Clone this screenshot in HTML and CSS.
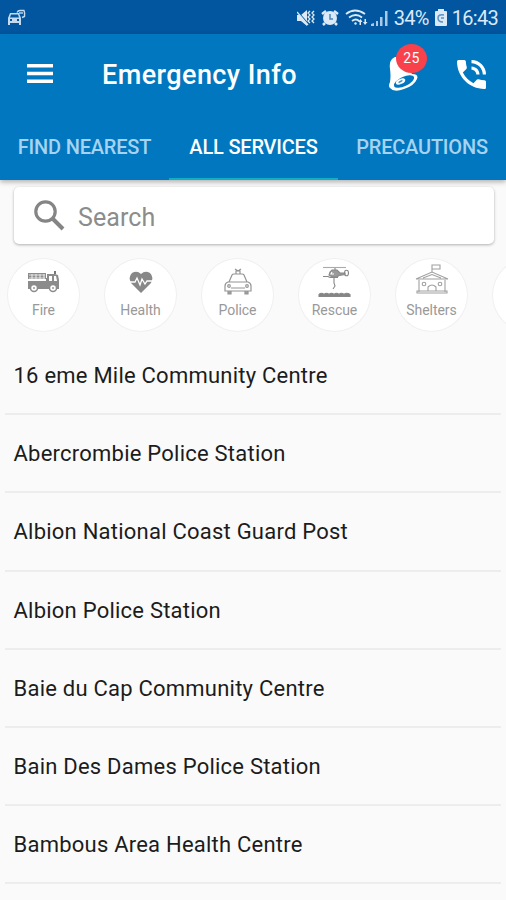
FILE: index.html
```html
<!DOCTYPE html>
<html lang="en">
<head>
<meta charset="utf-8">
<title>Emergency Info</title>
<link rel="stylesheet" href="styles.css">
</head>
<body>
<div class="app">
  <div class="status">
    <svg class="car" width="19" height="18" viewBox="0 0 19 18" fill="none" stroke="#c3daf0" stroke-width="1.4"><path d="M10 3.500q1-2 3-2h4q1 2 .5 6l-2.500 1"/><path d="M12 4h4" /><path fill="#c3daf0" stroke="none" fill-rule="evenodd" d="M3 4h9l2 5v7h-2v-2H3v2H1V9zM4 5.500L3 8.500h9l-1-3zM3 10v2h2v-2zm7 0v2h2v-2z"/></svg>
    <div class="status-right">
      <svg width="18" height="18" viewBox="0 0 18 18" fill="#dce9f6"><path d="M0 6h4l6-5v16l-6-5H0z"/><path d="M0 2l12 14" stroke="#01569f" stroke-width="1.500"/><path d="M0 3l11 13M13 2l-2 2 2 2-2 2 2 2-2 2 2 2M17 2l-2 2 2 2-2 2 2 2-2 2 2 2" fill="none" stroke="#dce9f6" stroke-width="1.300"/></svg>
      <svg class="alarm" width="18" height="18" viewBox="0 0 18 18"><circle cx="9" cy="9" r="7" fill="#dce9f6"/><path d="M1 5l4-3M17 5l-4-3M4 14l-2 2M14 14l2 2" stroke="#dce9f6" stroke-width="2.500"/><path d="M9 5v5h3" fill="none" stroke="#4a86bd" stroke-width="1.500"/></svg>
      <svg class="wifi" width="24" height="18" viewBox="0 0 24 18" fill="none" stroke="#dce9f6" stroke-width="1.800"><path d="M1 5q9-7 19 0M4 8.500q7-5 13 0M7 12q4-3 7 0"/><circle cx="10.500" cy="14.500" r="1.200" fill="#dce9f6" stroke="none"/><path fill="#dce9f6" stroke="none" d="M13 13l2.500-3 2 3h-1.500v3h-1.500v-3zM18 13h1.500v-3H21v3h1.500L20 16z"/></svg>
      <svg class="signal" width="18" height="18" viewBox="0 0 18 18"><path fill="#a9c9e7" d="M0 17v-2l3-1v3zM5 17v-5h2v5zM9 17V8h2.500v9zM14 17V2h2.500v15z"/></svg>
      <span class="percent">34%</span>
      <svg class="battery" width="12" height="18" viewBox="0 0 12 18"><path fill="#dce9f6" d="M3 0h6v2h2q1 0 1 1v13q0 1-1 1H1q-1 0-1-1V3q0-1 1-1h2z"/><path d="M9 6Q3 5 3 9t5 4M6 9h3" fill="none" stroke="#5b90c2" stroke-width="1.500"/></svg>
      <span class="clock">16:43</span>
    </div>
  </div>
  <header class="header">
    <div class="toolbar">
      <svg class="menu" width="26" height="20" viewBox="0 0 26 20" fill="#fff"><path d="M0 0h26v3.500H0zM0 7.800h26v3.500H0zM0 15.500h26V19H0z"/></svg>
      <h1 class="title">Emergency Info</h1>
      <div class="alerts">
        <svg width="32" height="36" viewBox="0 0 32 36"><path fill="#fff" d="M4 3Q8-1 14 2L24 18Q31 18 29 23Q26 30 16 33Q6 37 2 32Q0 30 2 26Q3 20 2 13Q1 6 4 3z"/><ellipse cx="16" cy="25.500" rx="11" ry="4.600" transform="rotate(-25 16 25.500)" fill="#0177bf"/><ellipse cx="12.500" cy="25.500" rx="5" ry="2.600" transform="rotate(-25 12.500 25.500)" fill="#fff"/><ellipse cx="12.500" cy="25.500" rx="2.400" ry=".9" transform="rotate(-25 12.500 25.500)" fill="#3a95cf"/></svg>
        <span class="badge">25</span>
      </div>
      <svg class="phone" width="29" height="29" viewBox="3 3 18 18" fill="#fff"><path d="M20 15.500c-1.250 0-2.450-.2-3.570-.57a1.020 1.020 0 0 0-1.020.24l-2.200 2.200a15.045 15.045 0 0 1-6.590-6.590l2.200-2.210a.96.96 0 0 0 .25-1A11.360 11.360 0 0 1 8.500 4c0-.55-.45-1-1-1H4c-.55 0-1 .45-1 1 0 9.390 7.610 17 17 17 .55 0 1-.45 1-1v-3.500c0-.55-.45-1-1-1zM19 12h2a9 9 0 0 0-9-9v2c3.870 0 7 3.130 7 7zm-4 0h2c0-2.760-2.240-5-5-5v2c1.660 0 3 1.340 3 3z"/></svg>
    </div>
    <nav class="tabs">
      <div class="tab"><span>FIND NEAREST</span></div>
      <div class="tab active"><span>ALL SERVICES</span></div>
      <div class="tab"><span>PRECAUTIONS</span></div>
    </nav>
  </header>
  <div class="search">
    <svg width="31" height="31" viewBox="0 0 31 31" fill="none" stroke="#858585"><circle cx="11.500" cy="11.500" r="9.700" stroke-width="3.200"/><path d="M18.500 18.500L29 29" stroke-width="4"/></svg>
    <span>Search</span>
  </div>
  <div class="cats">
    <div class="cat">
      <svg width="34" height="34" viewBox="0 1 34 34"><path fill="#8c8c8c" d="M1 8h18v5h1V9h8l3 1 1 5v9H1v-8h18v-2H1z"/><path d="M2 10h16M2 13h16M5 9v5M9 9v5M13 9v5M17 9v5" stroke="#e2e2e2" stroke-width="1.200"/><path d="M22 11h3v5h-3zM27 11h2l1 5h-3z" fill="#fff"/><path d="M28 6v3" stroke="#777" stroke-width="2"/><g fill="#fff" stroke="#8c8c8c" stroke-width="1.500"><circle cx="7" cy="23" r="3.500"/><circle cx="26" cy="23" r="3.500"/></g><circle cx="7" cy="23" r="1" fill="#999"/><circle cx="26" cy="23" r="1" fill="#999"/></svg>
      <span>Fire</span>
    </div>
    <div class="cat">
      <svg width="34" height="34" viewBox="0 0 34 34"><path fill="#888" d="M17 27L7 17Q4 11 8 7Q13 4 17 8Q21 4 26 7Q30 11 27 17z"/><path d="M6 16h5l2-4 3 7 2-6 3 5 2-3h5" fill="none" stroke="#fff" stroke-width="1.300"/></svg>
      <span>Health</span>
    </div>
    <div class="cat">
      <svg width="34" height="34" viewBox="0 0 34 34" fill="none" stroke="#949494" stroke-width="1.200"><path d="M8 16l3-7q.5-1 2-1h8q1.500 0 2 1l3 7M7 16h20q3 1 3 4v5H4v-5q0-3 3-4zM10 22h14M15 8V5h4v3M14 3l3 2 3-2"/><path d="M7 25v3h3v-3M24 25v3h3v-3" fill="#a0a0a0"/><circle cx="8" cy="20" r="1.300"/><circle cx="26" cy="20" r="1.300"/></svg>
      <span>Police</span>
    </div>
    <div class="cat">
      <svg width="34" height="34" viewBox="0 0 34 34" fill="none" stroke="#888" stroke-width="1.100"><path d="M5 1.500h23" stroke="#aaa"/><path fill="#999" d="M14 4h5l3 3h5v1.500l-6 1-2 1.500h-5l-3-2 1-3z"/><path d="M5 10.500h5l2 1h8M17 2v2M16 12v5l1 3-2 3"/><ellipse cx="28.500" cy="7" rx="2" ry="2.800"/><path d="M14 6l-1 2h3" stroke="#fff"/><path d="M1 28.500q2.500-2.500 5 0q2.500-2.500 5 0q2.500-2.500 5 0q2.500-2.500 5 0q2.500-2.500 5 0q2.500-2.500 6 0v2H1z" fill="#858585"/></svg>
      <span>Rescue</span>
    </div>
    <div class="cat">
      <svg width="34" height="34" viewBox="0 0 34 34" fill="none" stroke="#a0a0a0" stroke-width="1.100"><path d="M17 6V-1h8v4h-8M1 13h32L17 6zM8 12l9-3.500 9 3.500M4 14v12M30 14v12M2 25h30v2H2zM13 25v-4q4-4 8 0v4"/><circle cx="9" cy="18" r="1.800"/><circle cx="25" cy="18" r="1.800"/></svg>
      <span>Shelters</span>
    </div>
    <div class="cat"></div>
  </div>
  <ul class="list">
    <li>16 eme Mile Community Centre</li>
    <li>Abercrombie Police Station</li>
    <li>Albion National Coast Guard Post</li>
    <li>Albion Police Station</li>
    <li>Baie du Cap Community Centre</li>
    <li>Bain Des Dames Police Station</li>
    <li>Bambous Area Health Centre</li>
  </ul>
</div>
</body>
</html>
```
FILE: styles.css
```css
* { box-sizing: border-box; }
body { margin: 0; background: #fafafa; font-family: Roboto, "Liberation Sans", sans-serif; }
.app { width: 506px; height: 900px; overflow: hidden; display: flex; flex-direction: column; }
.app > * { flex-shrink: 0; }
.status { height: 34px; background: #01569f; display: flex; justify-content: space-between; align-items: center; padding: 2px 8px 0 7px; color: #dce9f6; }
.status-right { display: flex; align-items: center; font-size: 20px; }
.alarm { margin-left: 6px; }
.wifi { margin-left: 6px; }
.signal { margin-left: 2px; }
.percent { margin-left: 5px; letter-spacing: -0.7px; }
.battery { margin-left: 6px; }
.clock { margin-left: 5px; letter-spacing: -0.7px; }
.header { height: 146px; background: #0177bf; box-shadow: 0 2px 5px rgba(0,0,0,.3); }
.toolbar { height: 80px; display: flex; align-items: center; padding: 0 20px 0 27px; }
.menu { display: block; }
.title { margin: 2px 0 0 49px; font-size: 27px; font-weight: 500; letter-spacing: .43px; color: #fff; flex: 1; white-space: nowrap; }
.alerts { position: relative; width: 32px; height: 36px; margin-right: 37px; }
.badge { position: absolute; left: 8px; top: -12px; width: 31px; height: 29px; border-radius: 50%; background: #f8414a; color: #fff; font-size: 14px; line-height: 29px; text-align: center; letter-spacing: .5px; }
.tabs { display: grid; grid-template-columns: 169px 169px 168px; height: 66px; }
.tab { display: flex; justify-content: center; align-items: center; padding-top: 2px; color: #a5d3f0; font-size: 20px; font-weight: 500; letter-spacing: -.2px; white-space: nowrap; border-bottom: 2px solid transparent; }
.active { color: #fff; border-color: #0fb0c4; }
.search { margin: 7px 12px 0 14px; height: 57px; background: #fff; border-radius: 5px; box-shadow: 0 1px 3px rgba(0,0,0,.3); display: flex; align-items: center; padding: 0 0 0 20px; font-size: 25px; color: #8c8c8c; }
.search span { margin: 3px 0 0 13px; letter-spacing: .1px; }
.cats { display: grid; grid-template-columns: repeat(6, 73px); gap: 24px; padding: 14px 0 0 7px; height: 93px; }
.cat { height: 74px; border: 1px solid #f0f0f0; border-radius: 50%; background: #fff; display: flex; flex-direction: column; align-items: center; padding-top: 7px; font-size: 14px; line-height: 18px; color: #999; }
.cat svg { overflow: visible; }
.cat span { margin-top: 1px; letter-spacing: -.05px; }
.list { list-style: none; margin: 0; padding: 0 5px; }
.list li { height: 78.200px; padding: 0 8.500px; border-bottom: 2px solid #ededed; font-size: 22px; line-height: 78px; letter-spacing: .23px; color: #1c1c1c; white-space: nowrap; }
```
